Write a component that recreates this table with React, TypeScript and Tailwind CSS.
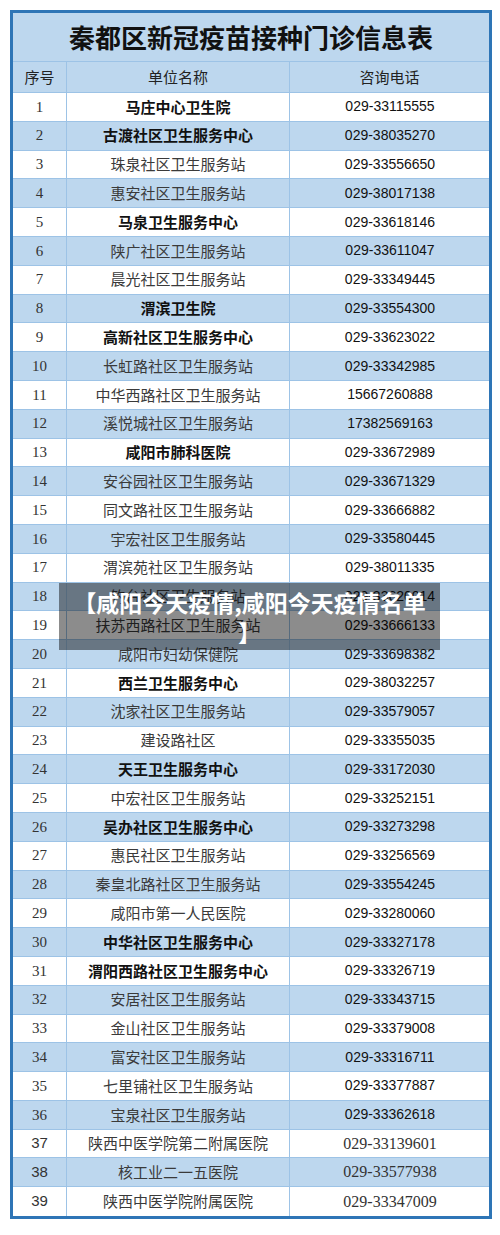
const rows: [string, string, boolean?][] = [
  ["马庄中心卫生院", "029-33115555", true],
  ["古渡社区卫生服务中心", "029-38035270", true],
  ["珠泉社区卫生服务站", "029-33556650"],
  ["惠安社区卫生服务站", "029-38017138"],
  ["马泉卫生服务中心", "029-33618146", true],
  ["陕广社区卫生服务站", "029-33611047"],
  ["晨光社区卫生服务站", "029-33349445"],
  ["渭滨卫生院", "029-33554300", true],
  ["高新社区卫生服务中心", "029-33623022", true],
  ["长虹路社区卫生服务站", "029-33342985"],
  ["中华西路社区卫生服务站", "15667260888"],
  ["溪悦城社区卫生服务站", "17382569163"],
  ["咸阳市肺科医院", "029-33672989", true],
  ["安谷园社区卫生服务站", "029-33671329"],
  ["同文路社区卫生服务站", "029-33666882"],
  ["宇宏社区卫生服务站", "029-33580445"],
  ["渭滨苑社区卫生服务站", "029-38011335"],
  ["钓台社区卫生服务站", "029-33620014"],
  ["扶苏西路社区卫生服务站", "029-33666133"],
  ["咸阳市妇幼保健院", "029-33698382"],
  ["西兰卫生服务中心", "029-38032257", true],
  ["沈家社区卫生服务站", "029-33579057"],
  ["建设路社区", "029-33355035"],
  ["天王卫生服务中心", "029-33172030", true],
  ["中宏社区卫生服务站", "029-33252151"],
  ["吴办社区卫生服务中心", "029-33273298", true],
  ["惠民社区卫生服务站", "029-33256569"],
  ["秦皇北路社区卫生服务站", "029-33554245"],
  ["咸阳市第一人民医院", "029-33280060"],
  ["中华社区卫生服务中心", "029-33327178", true],
  ["渭阳西路社区卫生服务中心", "029-33326719", true],
  ["安居社区卫生服务站", "029-33343715"],
  ["金山社区卫生服务站", "029-33379008"],
  ["富安社区卫生服务站", "029-33316711"],
  ["七里铺社区卫生服务站", "029-33377887"],
  ["宝泉社区卫生服务站", "029-33362618"],
  ["陕西中医学院第二附属医院", "029-33139601"],
  ["核工业二一五医院", "029-33577938"],
  ["陕西中医学院附属医院", "029-33347009"],
];

const cjk = "font-['Noto_Sans_CJK_SC',sans-serif]";

export default function App() {
  return (
    <div className="relative h-[1235px] w-[500px] overflow-hidden bg-white">
      <div className="ml-[10px] mt-[10px] w-[482px] border-[3px] border-[#2e75b6] bg-white">
        {/* title */}
        <div className="flex h-[49px] items-center justify-center border-b border-[#9dc3e6] bg-[#bdd7ee]">
          <h1 className={`${cjk} text-[26px] font-bold leading-none text-[#111]`}>
            秦都区新冠疫苗接种门诊信息表
          </h1>
        </div>

        {/* header */}
        <div
          className={`${cjk} grid h-[31px] grid-cols-[54px_223px_1fr] border-b border-[#9dc3e6] bg-[#bdd7ee] text-[15px] text-[#222]`}
        >
          <div className="flex items-center justify-center border-r border-[#9dc3e6]">序号</div>
          <div className="flex items-center justify-center border-r border-[#9dc3e6]">单位名称</div>
          <div className="flex items-center justify-center">咨询电话</div>
        </div>

        {rows.map(([name, phone, bold], i) => {
          const n = i + 1;
          const last = n === rows.length;
          const serifPhone = n >= 37;
          return (
            <div
              key={n}
              className={`grid h-[28.8px] grid-cols-[54px_223px_1fr] ${
                last ? "" : "border-b border-[#9dc3e6]"
              } ${n % 2 === 0 ? "bg-[#bdd7ee]" : "bg-white"}`}
            >
              <div
                className={`flex items-center justify-center border-r border-[#9dc3e6] text-[15px] text-[#333] ${
                  serifPhone
                    ? "font-['Liberation_Sans',sans-serif]"
                    : "font-['Liberation_Serif',serif]"
                }`}
              >
                {n}
              </div>
              <div
                className={`${cjk} flex items-center justify-center border-r border-[#9dc3e6] text-[15px] ${
                  bold ? "font-bold text-[#111]" : "text-[#3a3a3a]"
                }`}
              >
                {name}
              </div>
              <div
                className={`flex items-center justify-center pl-[1px] ${
                  serifPhone
                    ? "font-['Liberation_Serif',serif] text-[16px] text-[#333]"
                    : "font-['Liberation_Sans',sans-serif] text-[14px] text-[#111]"
                }`}
              >
                {phone}
              </div>
            </div>
          );
        })}
      </div>

      {/* caption overlay */}
      <div className="absolute left-[59px] top-[583px] flex h-[67px] w-[381px] flex-col items-center justify-center bg-black/45">
        <p
          className={`${cjk} whitespace-nowrap text-center text-[23px] font-bold leading-[30px] text-white`}
        >
          【咸阳今天疫情,咸阳今天疫情名单
          <br />】
        </p>
      </div>
    </div>
  );
}
